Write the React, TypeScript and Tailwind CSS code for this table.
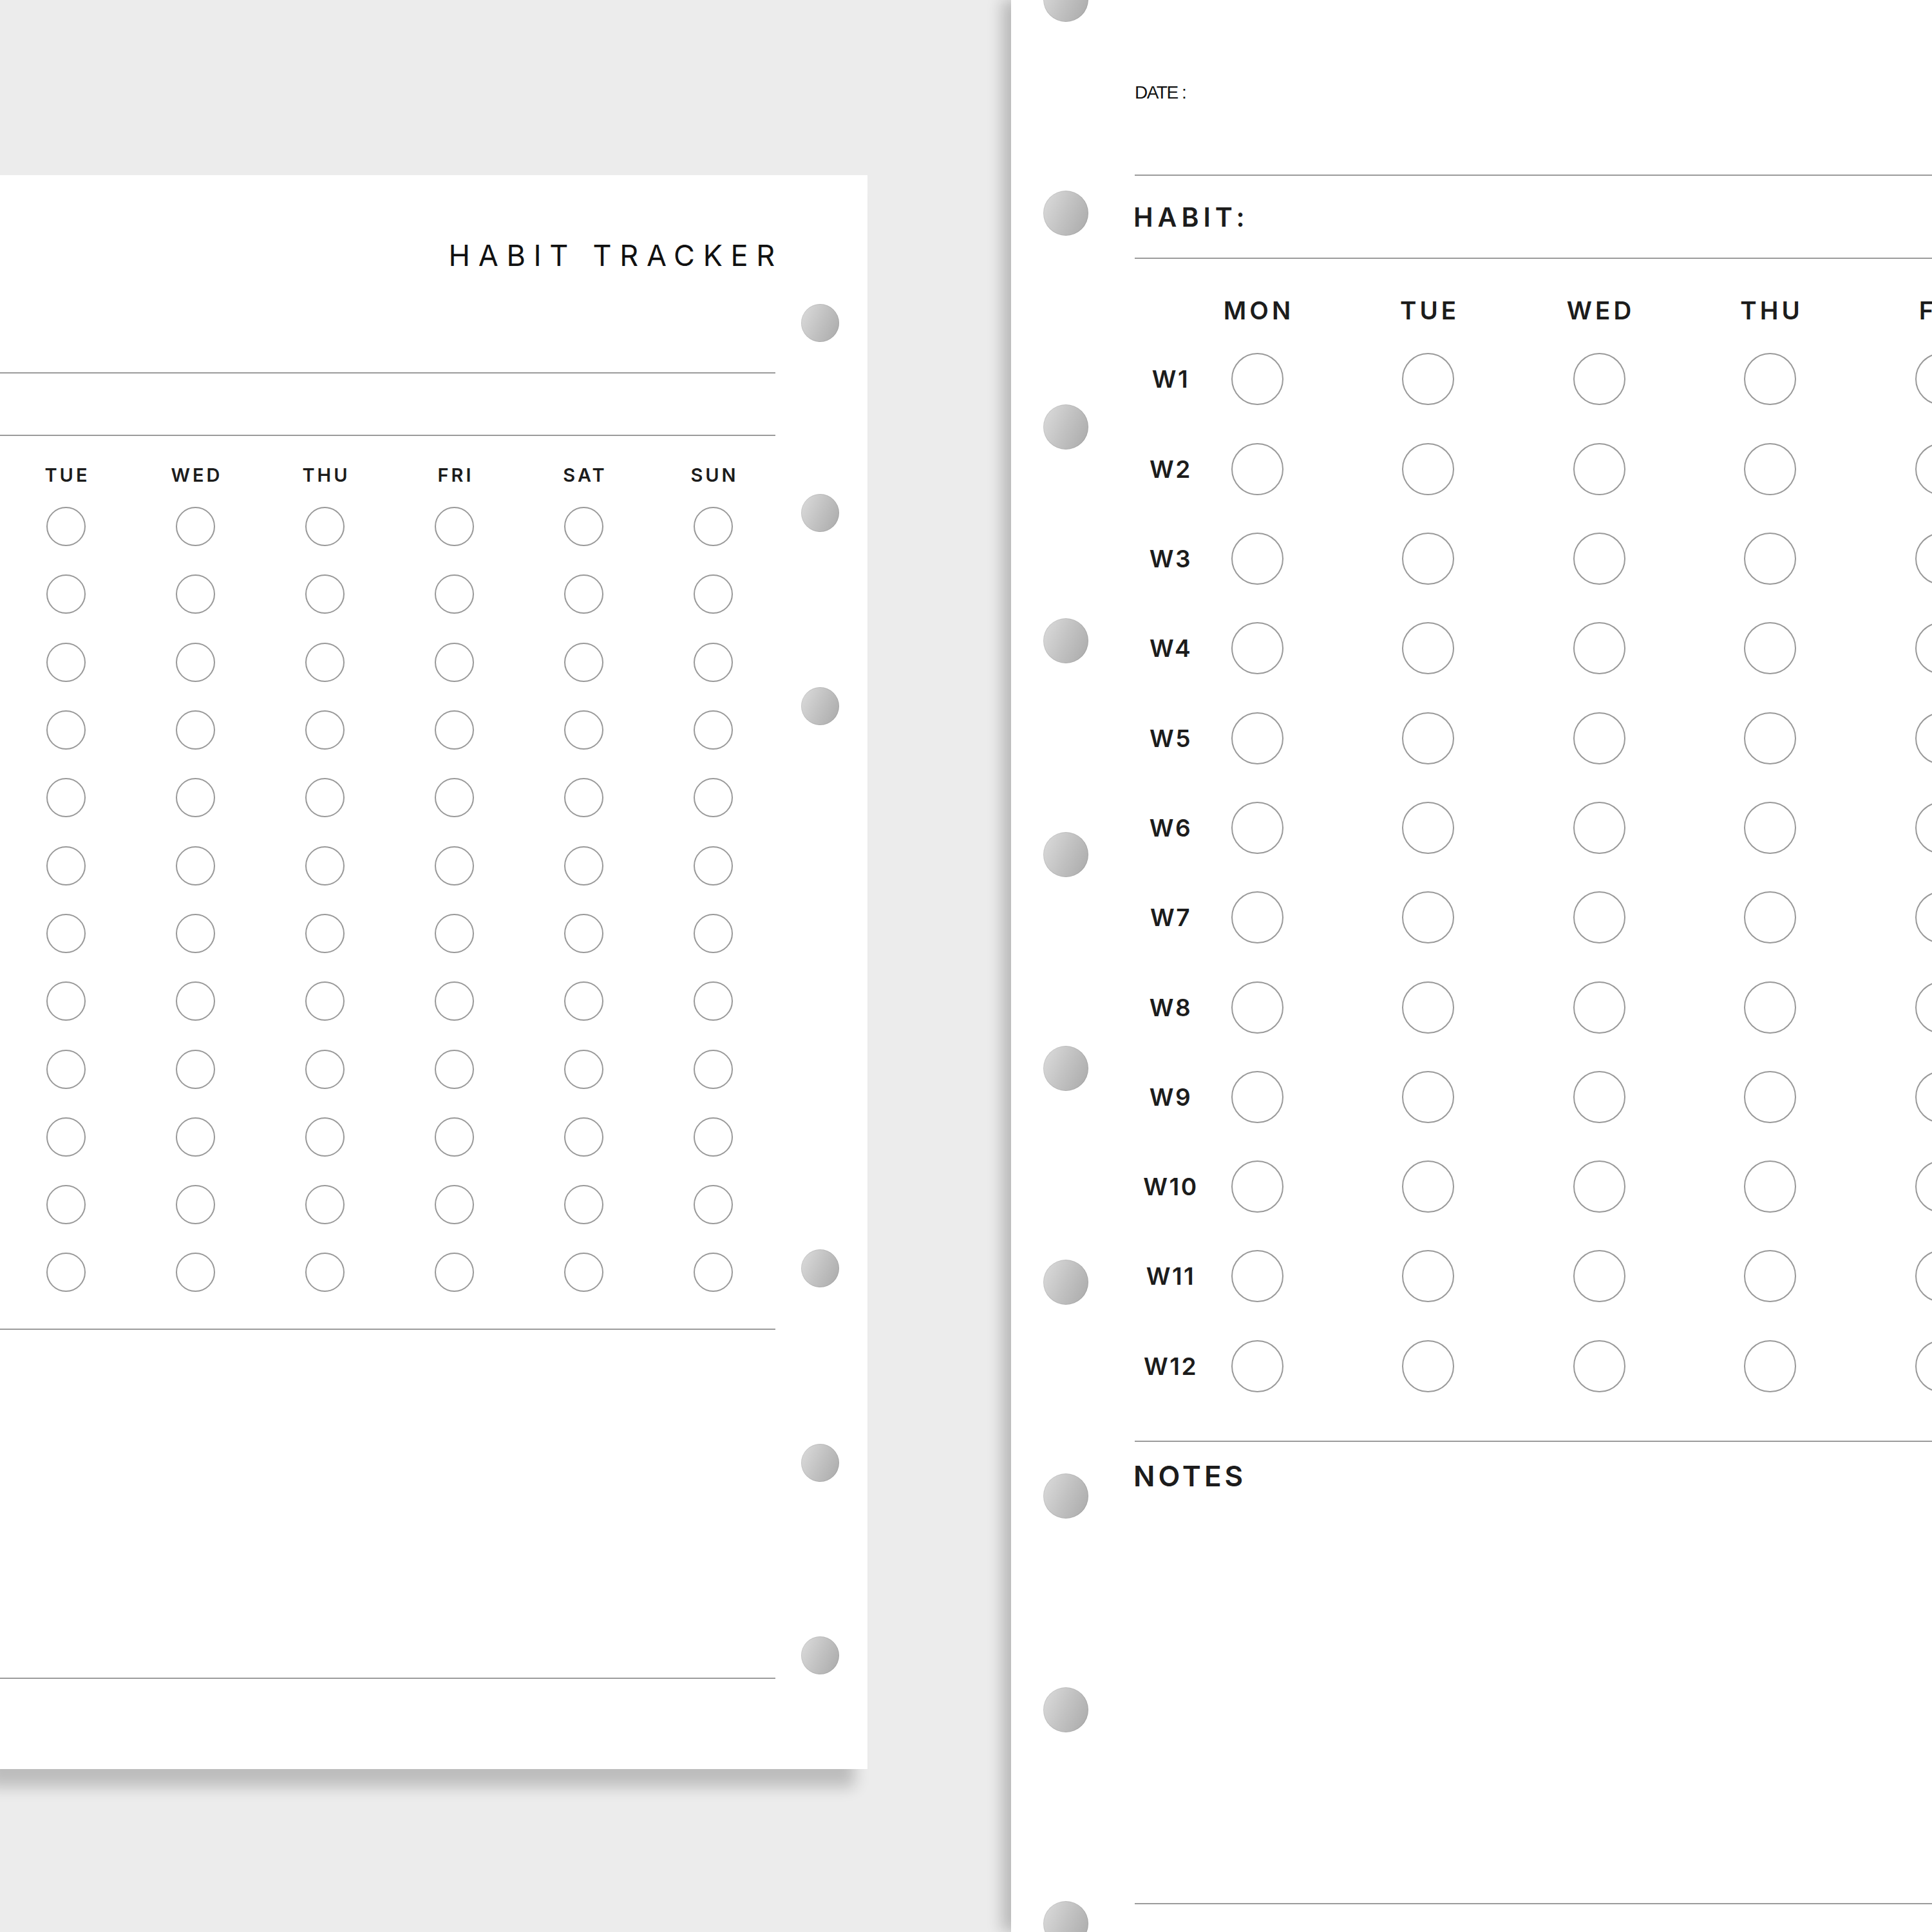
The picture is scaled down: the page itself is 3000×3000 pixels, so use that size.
const leftDays = ["TUE", "WED", "THU", "FRI", "SAT", "SUN"];
const rightDays = ["MON", "TUE", "WED", "THU", "FRI"];
const weeks = Array.from({ length: 12 }, (_, i) => `W${i + 1}`);

const inter = { fontFamily: "Inter, 'Open Sans', sans-serif" };
const arial = { fontFamily: "'Liberation Sans', Arial, sans-serif" };

// punched ring hole
const Hole = ({ size }: { size: "sm" | "lg" }) => (
  <div
    className={`shrink-0 rounded-full bg-[linear-gradient(115deg,#dddddd_0%,#c2c2c2_50%,#a9a9a9_100%)] shadow-[inset_0_0_0_1px_rgba(0,0,0,0.07)] ${
      size === "sm" ? "w-[59px] h-[59px]" : "w-[70px] h-[70px]"
    }`}
  />
);

const Rule = () => <div className="h-[2px] w-full bg-[#9b9b9b] shrink-0" />;

const LeftPage = () => (
  <div className="flex shrink-0 w-[1347px] h-[2475px] mt-[272px] bg-white shadow-[-20px_28px_22px_rgba(0,0,0,0.2)]">
    <div className="flex flex-col w-[1204px] shrink-0">
      {/* Title */}
      <div className="h-[306px] flex justify-end pt-[102px] shrink-0">
        <span
          className="text-[45px] leading-none font-normal tracking-[12.7px] text-[#111] -mr-[12px]"
          style={inter}
        >
          HABIT TRACKER
        </span>
      </div>
      <Rule />
      <div className="h-[95px] shrink-0" />
      <Rule />

      {/* Day labels */}
      <div className="grid grid-cols-[repeat(6,201px)] pl-[2px] h-[88px] pt-[46px] shrink-0">
        {leftDays.map((d) => (
          <div
            key={d}
            className="text-center text-[29px] leading-none font-semibold tracking-[4px] text-[#1c1c1c] pl-[4px]"
            style={inter}
          >
            {d}
          </div>
        ))}
      </div>

      {/* Circles */}
      <div className="flex flex-col shrink-0">
        {weeks.map((w) => (
          <div key={w} className="grid grid-cols-[repeat(6,201px)] pl-[2px] h-[105.3px] items-center">
            {leftDays.map((d) => (
              <div key={d} className="flex justify-center">
                <div className="w-[61px] h-[61px] rounded-full border-2 border-[#999]" />
              </div>
            ))}
          </div>
        ))}
      </div>

      <div className="h-[34px] shrink-0" />
      <Rule />
      <div className="h-[540px] shrink-0" />
      <Rule />
    </div>

    {/* Ring holes */}
    <div className="flex flex-col pl-[40px]">
      <div className="h-[200px] shrink-0" />
      <Hole size="sm" />
      <div className="h-[236px] shrink-0" />
      <Hole size="sm" />
      <div className="h-[241px] shrink-0" />
      <Hole size="sm" />
      <div className="h-[814px] shrink-0" />
      <Hole size="sm" />
      <div className="h-[243px] shrink-0" />
      <Hole size="sm" />
      <div className="h-[240px] shrink-0" />
      <Hole size="sm" />
    </div>
  </div>
);

const RightPage = () => (
  <div className="flex flex-1 h-[3000px] ml-[223px] bg-white shadow-[-14px_0_22px_rgba(0,0,0,0.22)]">
    {/* Ring holes */}
    <div className="flex flex-col gap-[262px] w-[192px] shrink-0 pl-[50px] -mt-[36px]">
      {Array.from({ length: 10 }, (_, i) => (
        <Hole key={i} size="lg" />
      ))}
    </div>

    <div className="flex flex-col flex-1">
      {/* Date */}
      <div className="h-[271px] pt-[130px] shrink-0">
        <span className="text-[28px] leading-none tracking-[-1.5px] text-[#111]" style={arial}>
          DATE :
        </span>
      </div>
      <Rule />

      {/* Habit */}
      <div className="h-[127px] pt-[43.5px] shrink-0 -ml-[2px]">
        <span
          className="text-[41px] leading-none font-semibold tracking-[7px] text-[#1c1c1c]"
          style={inter}
        >
          HABIT:
        </span>
      </div>
      <Rule />

      {/* Day header */}
      <div className="flex h-[117.35px] pt-[60.75px] shrink-0">
        <div className="w-[110px] shrink-0" />
        <div className="flex gap-[105.5px]">
          {rightDays.map((d) => (
            <div
              key={d}
              className="w-[160px] shrink-0 text-center text-[38.5px] leading-none font-semibold tracking-[5px] pl-[5px] text-[#1c1c1c]"
              style={inter}
            >
              {d}
            </div>
          ))}
        </div>
      </div>

      {/* Weeks */}
      <div className="flex flex-col shrink-0">
        {weeks.map((w) => (
          <div key={w} className="flex h-[139.3px] items-center">
            <div
              className="w-[110px] shrink-0 text-center text-[37px] leading-none font-semibold tracking-[2.5px] pl-[2px] text-[#1c1c1c]"
              style={inter}
            >
              {w}
            </div>
            <div className="flex gap-[105.5px]">
              {rightDays.map((d) => (
                <div key={d} className="w-[160px] shrink-0 flex justify-center">
                  <div className="w-[81px] h-[81px] rounded-full border-[2.5px] border-[#999]" />
                </div>
              ))}
            </div>
          </div>
        ))}
      </div>

      <div className="h-[46px] shrink-0" />
      <Rule />

      {/* Notes */}
      <div className="h-[716px] pt-[31px] shrink-0 -ml-[2px]">
        <span
          className="text-[44px] leading-none font-semibold tracking-[5px] text-[#1c1c1c]"
          style={inter}
        >
          NOTES
        </span>
      </div>
      <Rule />
    </div>
  </div>
);

export default function App() {
  return (
    <div className="flex w-[3000px] h-[3000px] overflow-hidden bg-[#ececec] items-start">
      <LeftPage />
      <RightPage />
    </div>
  );
}
